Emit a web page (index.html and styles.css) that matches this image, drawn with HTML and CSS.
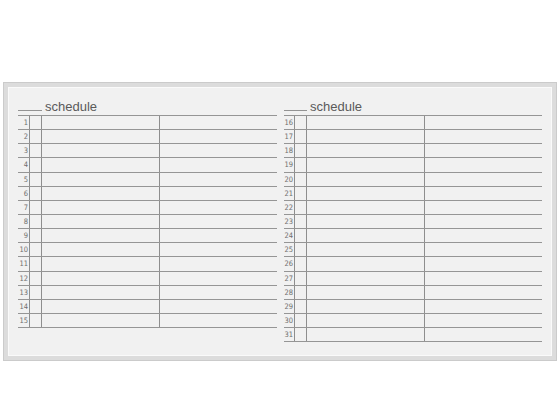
FILE: index.html
```html
<!DOCTYPE html>
<html>
<head>
<meta charset="utf-8">
<link rel="stylesheet" href="styles.css">
</head>
<body>
<div class="board">
  <div class="sheet left">
    <div class="title"><span class="blank"></span><span class="label">schedule</span></div>
    <div class="table" id="t1"></div>
  </div>
  <div class="sheet right">
    <div class="title"><span class="blank"></span><span class="label">schedule</span></div>
    <div class="table" id="t2"></div>
  </div>
</div>
<script>
function fill(id, from, to) {
  var t = document.getElementById(id);
  for (var i = from; i <= to; i++) {
    var r = document.createElement('div');
    r.className = 'row';
    r.innerHTML = '<span class="num">' + i + '</span><span class="c2"></span><span class="c3"></span><span class="c4"></span>';
    t.appendChild(r);
  }
}
fill('t1', 1, 15);
fill('t2', 16, 31);
</script>
</body>
</html>
```
FILE: styles.css
```css
html, body {
  margin: 0;
  padding: 0;
  background: #ffffff;
}
.board {
  box-sizing: border-box;
  margin: 82px 0 0 3px;
  width: 554px;
  height: 279px;
  background: #f1f1f1;
  border: 5px solid #dcdcdc;
  box-shadow: inset 1px 1px 0 #fafafa, inset -1px -1px 0 #fafafa;
  outline: 1px solid #cbcbcb;
  outline-offset: -1px;
  display: flex;
  align-items: flex-start;
  padding: 14px 10px 0 10px;
  gap: 7px;
}
.sheet.left { width: 259px; }
.sheet.right { width: 258px; }
.title {
  display: flex;
  align-items: flex-end;
  height: 12px;
  margin-bottom: 2px;
}
.blank {
  width: 24px;
  height: 0;
  border-bottom: 1px solid #939393;
  margin-bottom: 2px;
}
.right .blank { width: 23px; }
.label {
  margin-left: 3px;
  font-family: "Liberation Sans", Arial, sans-serif;
  font-size: 13px;
  line-height: 12px;
  color: #5a5a5a;
}
.table {
  border-top: 1px solid #959595;
}
.row {
  box-sizing: border-box;
  height: 14.15px;
  border-bottom: 1px solid #959595;
  display: grid;
  grid-template-columns: 12px 12px 118px 1fr;
}
.right .row {
  grid-template-columns: 11px 12px 118px 1fr;
}
.row span {
  display: block;
}
.num {
  border-right: 1px solid #8e8e8e;
  font-family: "DejaVu Sans Condensed", "Liberation Sans Narrow", "Liberation Sans", sans-serif;
  font-size: 7.5px;
  line-height: 13px;
  color: #6e6e6e;
  text-align: right;
  padding-right: 1px;
}
.c2, .c3 {
  border-right: 1px solid #8e8e8e;
}
```
